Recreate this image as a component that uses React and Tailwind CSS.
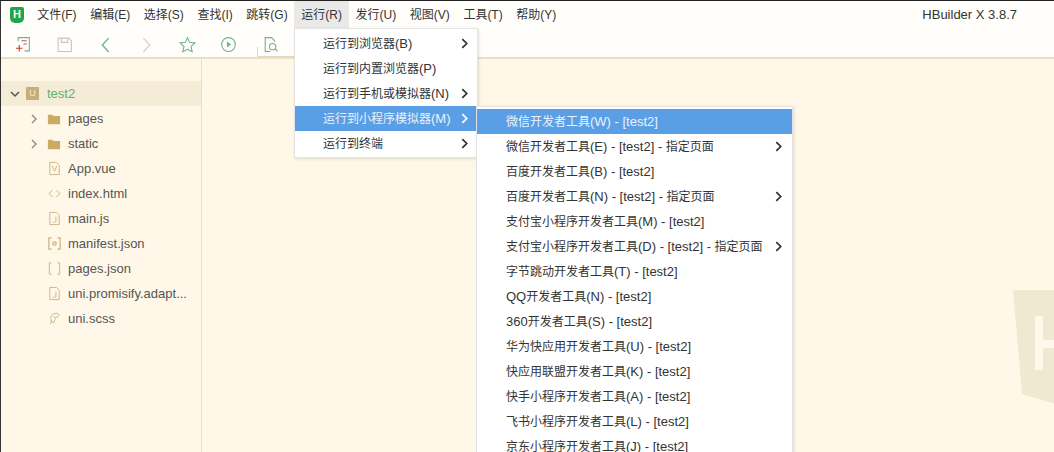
const FONT = "font-['Liberation_Sans','Noto_Sans_CJK_SC',sans-serif]";

const menuBar = ["文件(F)", "编辑(E)", "选择(S)", "查找(I)", "跳转(G)", "运行(R)", "发行(U)", "视图(V)", "工具(T)", "帮助(Y)"];

const runMenu = [
  { label: "运行到浏览器(B)", arrow: true },
  { label: "运行到内置浏览器(P)" },
  { label: "运行到手机或模拟器(N)", arrow: true },
  { label: "运行到小程序模拟器(M)", arrow: true, active: true },
  { label: "运行到终端", arrow: true },
];

const miniMenu = [
  { label: "微信开发者工具(W) - [test2]", active: true },
  { label: "微信开发者工具(E) - [test2] - 指定页面", arrow: true },
  { label: "百度开发者工具(B) - [test2]" },
  { label: "百度开发者工具(N) - [test2] - 指定页面", arrow: true },
  { label: "支付宝小程序开发者工具(M) - [test2]" },
  { label: "支付宝小程序开发者工具(D) - [test2] - 指定页面", arrow: true },
  { label: "字节跳动开发者工具(T) - [test2]" },
  { label: "QQ开发者工具(N) - [test2]" },
  { label: "360开发者工具(S) - [test2]" },
  { label: "华为快应用开发者工具(U) - [test2]" },
  { label: "快应用联盟开发者工具(K) - [test2]" },
  { label: "快手小程序开发者工具(A) - [test2]" },
  { label: "飞书小程序开发者工具(L) - [test2]" },
  { label: "京东小程序开发者工具(J) - [test2]" },
];

const tan = "#c9b382";

// Latin runs at 13px, Chinese runs at 12px, as in the menus of the app
function MixedText({ text }) {
  return (
    <span className="text-[13px]">
      {text.split(/([\u4e00-\u9fff]+)/).map((part, i) =>
        /[\u4e00-\u9fff]/.test(part) ? (
          <span key={i} className="text-[12px]">
            {part}
          </span>
        ) : (
          part
        )
      )}
    </span>
  );
}

function Svg({ children, size = 16 }) {
  return (
    <svg width={size} height={size} viewBox="0 0 16 16" fill="none" strokeWidth="1" className="shrink-0">
      {children}
    </svg>
  );
}

function Folder() {
  return (
    <Svg size={14}>
      <path d="M1 3h5l1.500 1.500H15V14H1z" fill="#c9ab66" />
    </Svg>
  );
}

function Chevron({ size = 10, color = "#8a8a80", width = 1.4 }) {
  return (
    <svg width={size} height={size} viewBox="0 0 10 10" fill="none" stroke={color} strokeWidth={width} className="shrink-0">
      <path d="M3 1l4 4-4 4" />
    </svg>
  );
}

function FileIcon({ name }) {
  if (name === "vue")
    return (
      <Svg size={15}>
        <path d="M3 1.500h7l3 3v10H3z" stroke={tan} />
        <path d="M5.500 5l2.500 6 2.500-6" stroke={tan} />
      </Svg>
    );
  if (name === "html")
    return (
      <Svg size={15}>
        <path d="M6 4.500L2 8l4 3.500M10 4.500L14 8l-4 3.500" stroke={tan} />
      </Svg>
    );
  if (name === "js")
    return (
      <Svg size={15}>
        <path d="M3 1.500h7l3 3v10H3z" stroke={tan} />
        <path d="M9.500 6v5c0 1.500-2.500 1.500-3.500 .5" stroke={tan} />
      </Svg>
    );
  if (name === "manifest")
    return (
      <Svg size={15}>
        <path d="M5 2H2v12h3M11 2h3v12h-3" stroke={tan} strokeWidth="1.300" />
        <circle cx="8" cy="8" r="2.500" fill={tan} />
        <circle cx="8" cy="8" r="1" fill="#fff8e8" />
      </Svg>
    );
  if (name === "brackets")
    return (
      <Svg size={15}>
        <path d="M5 2H2.500v12H5M11 2h2.500v12H11" stroke={tan} />
      </Svg>
    );
  return (
    <Svg size={15}>
      <path d="M3.500 14c2-3 1-4.500 .5-6C3 5 7 2 11 2.500c2.500 .5 2 3.500-.5 4-2 .5-3.500 .5-4-.5M3.500 10.500l3.500 1.500M9 8l-2 5" stroke={tan} />
    </Svg>
  );
}

function TreeRow({ label, icon, folder }) {
  return (
    <div className="flex h-[25px] items-center">
      <div className="flex w-[46px] shrink-0 items-center pl-[28px]">
        {folder ? <Chevron /> : null}
      </div>
      <div className="flex w-[21px] shrink-0 items-center">
        {folder ? <Folder /> : <FileIcon name={icon} />}
      </div>
      <span className="truncate text-[13px] text-[#555]">{label}</span>
    </div>
  );
}

function ToolSlot({ children }) {
  return <div className="flex w-[41px] shrink-0 justify-center">{children}</div>;
}

function Toolbar() {
  const green = "#6fb28c";
  return (
    <div className="flex h-[29px] shrink-0 items-center bg-[#fffefa] pl-[2px] pt-[3px]">
      <ToolSlot>
        <Svg size={17}>
          <path d="M3 5V1.500h10.500V14H9" stroke={green} />
          <path d="M6 4.500h5M8 7.500h3" stroke="#c0564a" />
          <path d="M1 11.500h6M4 8.500v6" stroke="#c0392b" />
        </Svg>
      </ToolSlot>
      <ToolSlot>
        <Svg size={17}>
          <path d="M2 2h10l2.500 2.500V14.500H2z" stroke="#c4c4c4" />
          <path d="M5 2v4h6V2" stroke="#c4c4c4" />
        </Svg>
      </ToolSlot>
      <ToolSlot>
        <Svg size={17}>
          <path d="M11 2L5 8.500l6 6.500" stroke={green} strokeWidth="1.300" />
        </Svg>
      </ToolSlot>
      <ToolSlot>
        <Svg size={17}>
          <path d="M5 2l6 6.500L5 15" stroke="#d4d4d4" strokeWidth="1.300" />
        </Svg>
      </ToolSlot>
      <ToolSlot>
        <Svg size={17}>
          <path d="M8 1.500l2 4.500 5 .5-3.700 3.300 1.100 5L8 12.500l-4.400 2.300 1.100-5L1 6.500 6 6z" stroke={green} />
        </Svg>
      </ToolSlot>
      <ToolSlot>
        <Svg size={17}>
          <circle cx="8" cy="8" r="6.500" stroke={green} />
          <path d="M6.500 5.200l4 2.800-4 2.800z" fill={green} />
        </Svg>
      </ToolSlot>
      {/* active tab: short left edge and a bottom line */}
      <div className="ml-[8px] flex h-[27px] w-[38px] shrink-0 items-center self-end border-b border-[#e0d8c0]">
        <div className="h-[9px] w-px self-end bg-[#e0d8c0]" />
        <div className="ml-[4px] pt-[2px]">
          <Svg size={17}>
            <path d="M8 14.500H3V1.500h6l3 3v1" stroke={green} />
            <circle cx="10" cy="10" r="3" stroke={green} />
            <path d="M12.200 12.200l2.500 2.300" stroke={green} />
          </Svg>
        </div>
      </div>
    </div>
  );
}

function DropMenu({ items, className, itemClass }) {
  return (
    <div className={`absolute z-10 border border-[#e4e4e4] bg-white shadow-[1px_1px_3px_rgba(0,0,0,0.12)] ${className}`}>
      {items.map((item) => (
        <div
          key={item.label}
          className={`flex h-[25px] items-center justify-between whitespace-nowrap ${itemClass} ${
            item.active ? "bg-[#5a9fe6] text-[#e8f2fc]" : "text-[#333]"
          }`}
        >
          <MixedText text={item.label} />
          {item.arrow ? <Chevron size={11} color={item.active ? "#fff" : "#333"} width={1.6} /> : null}
        </div>
      ))}
    </div>
  );
}

export default function App() {
  return (
    <div className={`relative flex h-[452px] w-[1054px] flex-col overflow-hidden border-t border-l border-t-[#222] border-l-[#333] bg-[#fff8e8] ${FONT}`}>
      {/* Menu bar */}
      <div className="flex h-[27px] shrink-0 items-center bg-[#fffefa] text-[12px] text-[#333]">
        <div className="ml-[9px] flex h-[16px] w-[14px] items-center justify-center rounded-b-[5px] rounded-t-[2px] bg-[#1fa64a] text-[11px] font-bold leading-none text-white">
          H
        </div>
        <div className="ml-[6.500px] flex h-full items-center">
          {menuBar.map((name) => (
            <div
              key={name}
              className={`flex h-full items-center whitespace-nowrap px-[6.800px] ${name === "运行(R)" ? "bg-[#e9e9e9]" : ""}`}
            >
              {name}
            </div>
          ))}
        </div>
        <span className="ml-auto mr-[37px] text-[13px]">HBuilder X 3.8.7</span>
      </div>

      <Toolbar />
      <div className="h-[2px] shrink-0 border-y border-[#e9dfc5] bg-[#fffbf0]" />

      {/* Body */}
      <div className="flex min-h-0 flex-1">
        <div className="w-[201px] shrink-0 border-r border-[#eadfc6] pt-[22px]">
          <div className="flex h-[25px] items-center bg-[#f4ecd6]">
            <div className="flex w-[25px] shrink-0 justify-center pl-[2px]">
              <svg width="10" height="10" viewBox="0 0 10 10" fill="none" stroke="#555" strokeWidth="1.500">
                <path d="M1 3l4 4 4-4" />
              </svg>
            </div>
            <div className="flex h-[13px] w-[13px] items-center justify-center rounded-[1px] bg-[#c7ae78] text-[9px] leading-none text-[#f4ecd6]">
              U
            </div>
            <span className="ml-[8px] text-[13px] text-[#5cb27a]">test2</span>
          </div>
          <TreeRow label="pages" folder />
          <TreeRow label="static" folder />
          <TreeRow label="App.vue" icon="vue" />
          <TreeRow label="index.html" icon="html" />
          <TreeRow label="main.js" icon="js" />
          <TreeRow label="manifest.json" icon="manifest" />
          <TreeRow label="pages.json" icon="brackets" />
          <TreeRow label="uni.promisify.adapt..." icon="js" />
          <TreeRow label="uni.scss" icon="scss" />
        </div>
        <div className="flex-1" />
      </div>

      {/* Watermark in the editor area */}
      <svg className="absolute left-[1012px] top-[289px]" width="42" height="115" viewBox="0 0 42 115">
        <path d="M0 0H42V114L9 104z" fill="#f0e9d2" />
        <path d="M22 26h8v54h-8zM30 50h12v8H30z" fill="#fff8e8" />
      </svg>

      <DropMenu items={runMenu} className="left-[293px] top-[27px] w-[184px] pb-[1px] pt-[2px]" itemClass="pl-[28px] pr-[7px]" />
      <DropMenu items={miniMenu} className="left-[475px] top-[105px] w-[317px] pt-[2px]" itemClass="pl-[29px] pr-[8px]" />
    </div>
  );
}
